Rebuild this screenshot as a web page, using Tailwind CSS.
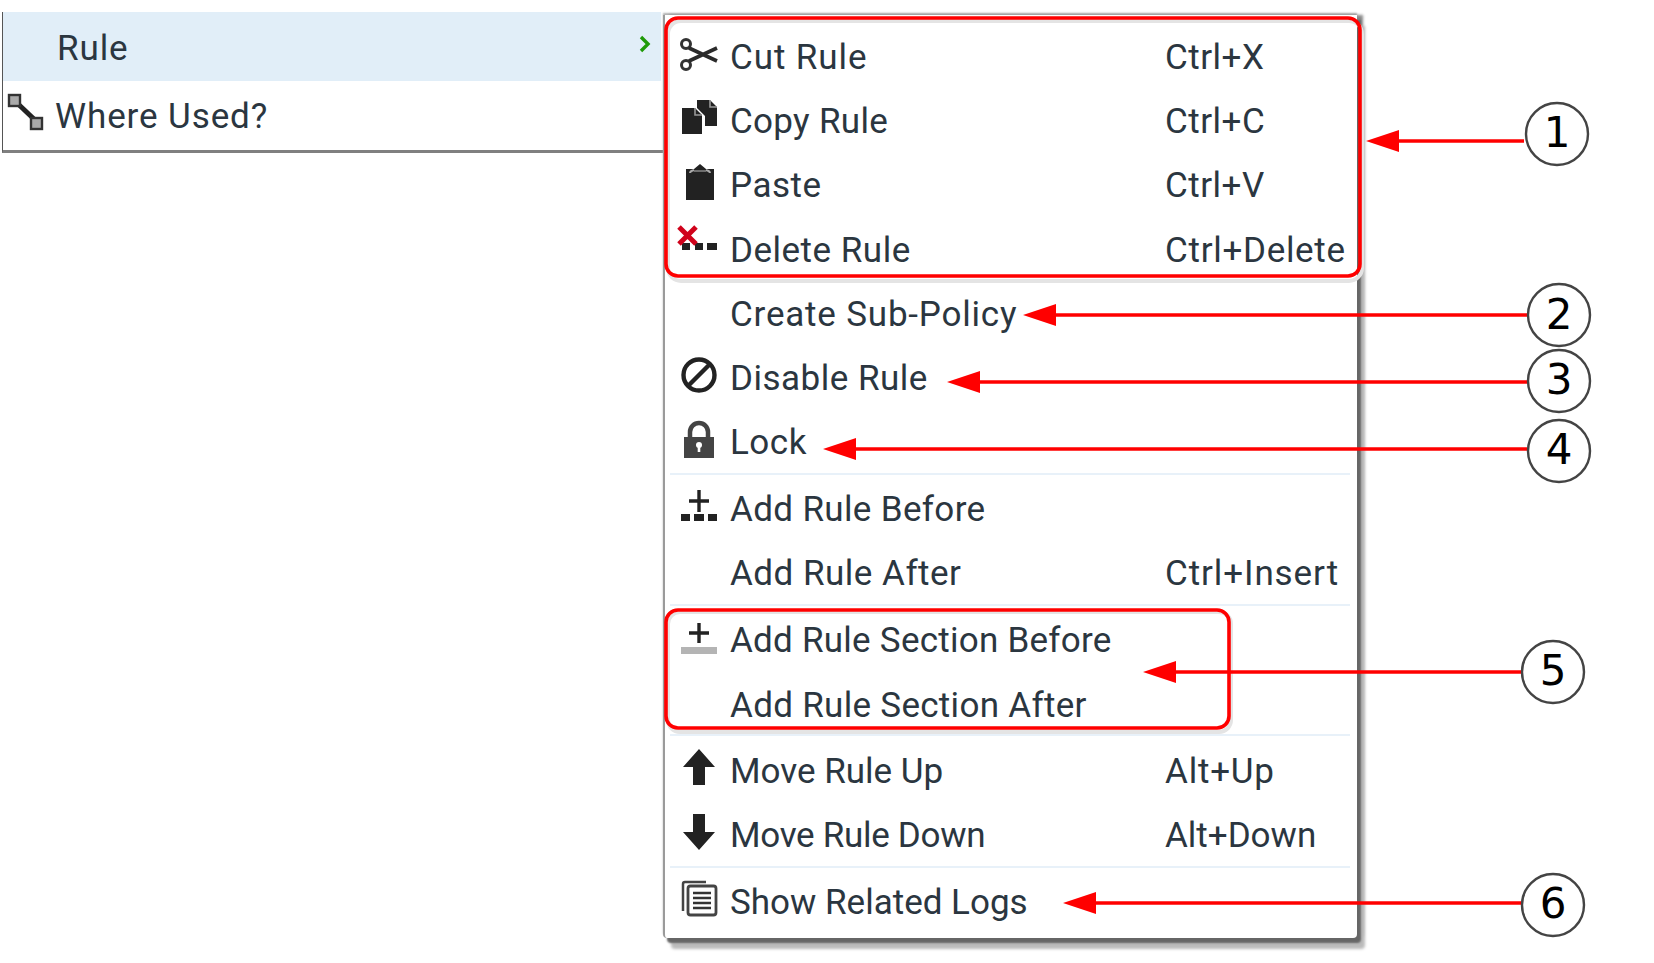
<!DOCTYPE html>
<html>
<head>
<meta charset="utf-8">
<script src="https://cdn.jsdelivr.net/npm/@tailwindcss/browser@4"></script>
</head>
<body class="bg-white">
<div class="relative w-[1654px] h-[963px] overflow-hidden bg-white font-['Roboto',sans-serif] text-[35px] tracking-[0.5px] leading-none text-[#2b3640]">
  <div class="flex items-start pl-[2px] pt-[12px]">
    <!-- parent menu -->
    <div class="w-[661px] h-[141px] border-l border-b-[3px] border-l-[#555] border-b-[#808080] flex flex-col">
      <div class="h-[69px] w-[658px] bg-[#e1eef8] flex items-center pl-[54px] pr-[10px] justify-between">
        <span class="mt-[3px] tracking-[0.9px]">Rule</span>
        <svg class="w-[12px] h-[18px] -mt-[6px] blur-[0.4px]" viewBox="0 0 12 18"><path d="M2 2 L9 9 L2 16" fill="none" stroke="#1f9a08" stroke-width="3.4"/></svg>
      </div>
      <div class="flex-1 flex items-center pl-[52px] relative">
        <svg class="absolute left-[4px] top-[12px] w-[38px] h-[38px] blur-[0.4px]" viewBox="0 0 38 38">
          <path d="M9 9 L29 28" stroke="#222" stroke-width="5"/>
          <rect x="2" y="2" width="11" height="11" fill="#aaa" stroke="#333" stroke-width="2.4"/>
          <rect x="24" y="25" width="11" height="11" fill="#aaa" stroke="#333" stroke-width="2.4"/>
        </svg>
        <span class="mt-[1px] tracking-[0.9px]">Where Used?</span>
      </div>
    </div>
    <!-- context menu -->
    <div class="mt-[3px] w-[694px] h-[923px] bg-white border-l-2 border-l-[#9a9a9a] rounded-b-[4px] shadow-[4px_5px_2px_#666,8px_11px_3px_#bbb,6px_0_3px_#888,0_-2px_2px_#b0b0b0] pt-[10px]">
      <div class="flex h-[64.3px] items-center">
        <div class="w-[65px] pl-[15px] self-start pt-[9px]"><svg class="w-[38px] h-[38px] overflow-visible blur-[0.4px]" viewBox="0 0 38 38"><g fill="none" stroke="#333" stroke-width="3"><circle cx="6" cy="10" r="4.5"/><circle cx="6" cy="31" r="4.5"/></g><path d="M9 14 L37 27 M9 27 L37 14" stroke="#2a2a2a" stroke-width="3.6" fill="none"/></svg></div>
        <div class="w-[435px] tracking-[0.9px]">Cut Rule</div><div>Ctrl+X</div>
      </div>
      <div class="flex h-[64.3px] items-center">
        <div class="w-[65px] pl-[15px] self-start pt-[9px]"><svg class="w-[38px] h-[38px] overflow-visible blur-[0.4px]" viewBox="0 0 38 38"><path d="M17 2 H30 L37 9 V28 H25 V18 L17 10 Z" fill="#222"/><path d="M2 10 H15 L22 17 V36 H2 Z" fill="#222"/><path d="M15 10 V17 H22" fill="none" stroke="#999" stroke-width="1.6"/><path d="M30 2 V9 H37" fill="none" stroke="#999" stroke-width="1.6"/></svg></div>
        <div class="w-[435px] tracking-[0.3px]">Copy Rule</div><div>Ctrl+C</div>
      </div>
      <div class="flex h-[64.3px] items-center">
        <div class="w-[65px] pl-[15px] self-start pt-[9px]"><svg class="w-[38px] h-[38px] overflow-visible blur-[0.4px]" viewBox="0 0 38 38"><path d="M6 6 H14 L20 1 L26 6 H34 V37 H6 Z" fill="#222"/><path d="M10 10 Q10 8 14 7 M30 10 Q30 8 26 7" fill="none" stroke="#aaa" stroke-width="2"/><path d="M14 8 H26" stroke="#888" stroke-width="1.5"/></svg></div>
        <div class="w-[435px]">Paste</div><div>Ctrl+V</div>
      </div>
      <div class="flex h-[64.3px] items-center">
        <div class="w-[65px] pl-[15px] self-start pt-[9px]"><svg class="w-[38px] h-[38px] overflow-visible blur-[0.3px]" viewBox="0 0 38 38"><g fill="#222"><rect x="2" y="16" width="8" height="7"/><rect x="15" y="16" width="8" height="7"/><rect x="27" y="16" width="10" height="7"/></g><path d="M-1 0 L16 17 M16 0 L-1 17" stroke="#d0021b" stroke-width="5"/></svg></div>
        <div class="w-[435px]">Delete Rule</div><div class="tracking-[0.7px]">Ctrl+Delete</div>
      </div>
      <div class="flex h-[64.3px] items-center">
        <div class="w-[65px]"></div>
        <div class="w-[435px] tracking-[0.8px]">Create Sub-Policy</div>
      </div>
      <div class="flex h-[64.3px] items-center">
        <div class="w-[65px] pl-[15px] self-start pt-[9px]"><svg class="w-[38px] h-[38px] overflow-visible blur-[0.4px]" viewBox="0 0 38 38"><circle cx="19" cy="20" r="15.5" fill="none" stroke="#222" stroke-width="4.4"/><path d="M8 31 L30 9" stroke="#222" stroke-width="4.4"/></svg></div>
        <div class="w-[435px]">Disable Rule</div>
      </div>
      <div class="flex h-[64.3px] items-center">
        <div class="w-[65px] pl-[15px] self-start pt-[9px]"><svg class="w-[38px] h-[38px] overflow-visible blur-[0.4px]" viewBox="0 0 38 38"><path d="M10 17 V12 A9 9 0 0 1 28 12 V17" fill="none" stroke="#444" stroke-width="4.5"/><path d="M4 17 H34 V38 H4 Z" fill="#444"/><circle cx="19" cy="25" r="3" fill="#fff"/><rect x="17.7" y="25" width="2.6" height="7" fill="#fff"/></svg></div>
        <div class="w-[435px]">Lock</div>
      </div>
      <div class="h-[2px] -mt-[2px] mb-[2px] mx-[5px] w-[680px] bg-[#e8f1f9]"></div>
      <div class="flex h-[64.3px] items-center">
        <div class="w-[65px] pl-[15px] self-start pt-[9px]"><svg class="w-[38px] h-[38px] overflow-visible blur-[0.3px]" viewBox="0 0 38 38"><path d="M19 4 V26 M9 15 H29" stroke="#222" stroke-width="3.4"/><g fill="#222"><rect x="1" y="28" width="9" height="7"/><rect x="14" y="28" width="10" height="7"/><rect x="28" y="28" width="9" height="7"/></g></svg></div>
        <div class="w-[435px] tracking-[0.35px]">Add Rule Before</div>
      </div>
      <div class="flex h-[64.3px] items-center">
        <div class="w-[65px]"></div>
        <div class="w-[435px]">Add Rule After</div><div class="tracking-[0.9px]">Ctrl+Insert</div>
      </div>
      <div class="h-[2px] -mt-[2px] mb-[3px] mx-[5px] w-[680px] bg-[#e8f1f9]"></div>
      <div class="flex h-[64.3px] items-center">
        <div class="w-[65px] pl-[15px] self-start pt-[9px]"><svg class="w-[38px] h-[38px] overflow-visible blur-[0.3px]" viewBox="0 0 38 38"><path d="M19 5 V25 M9 15 H29" stroke="#222" stroke-width="3.4"/><rect x="1" y="29" width="36" height="7" fill="#b4b4b4"/></svg></div>
        <div class="w-[435px] tracking-[0.25px]">Add Rule Section Before</div>
      </div>
      <div class="flex h-[64.3px] items-center">
        <div class="w-[65px]"></div>
        <div class="w-[435px] tracking-[0.3px]">Add Rule Section After</div>
      </div>
      <div class="h-[2px] -mt-[3px] mb-[3px] mx-[5px] w-[680px] bg-[#e8f1f9]"></div>
      <div class="flex h-[64.3px] items-center">
        <div class="w-[65px] pl-[15px] self-start pt-[9px]"><svg class="w-[38px] h-[38px] overflow-visible blur-[0.3px]" viewBox="0 0 38 38"><path d="M19 1 L35 19 H25 V37 H13 V19 H3 Z" fill="#222"/></svg></div>
        <div class="w-[435px] tracking-[0px]">Move Rule Up</div><div class="tracking-[0.8px]">Alt+Up</div>
      </div>
      <div class="flex h-[64.3px] items-center">
        <div class="w-[65px] pl-[15px] self-start pt-[9px]"><svg class="w-[38px] h-[38px] overflow-visible blur-[0.3px]" viewBox="0 0 38 38"><path d="M13 1 H25 V19 H35 L19 37 L3 19 H13 Z" fill="#222"/></svg></div>
        <div class="w-[435px] tracking-[-0.3px]">Move Rule Down</div><div class="tracking-[0px]">Alt+Down</div>
      </div>
      <div class="h-[2px] -mt-[2px] mb-[2px] mx-[5px] w-[680px] bg-[#e8f1f9]"></div>
      <div class="flex h-[64.3px] items-center">
        <div class="w-[65px] pl-[15px] self-start pt-[9px]"><svg class="w-[38px] h-[38px] overflow-visible blur-[0.3px]" viewBox="0 0 38 38"><path d="M3 32 V5 Q3 3 5 3 H26" fill="none" stroke="#444" stroke-width="2.5"/><rect x="8" y="7" width="28" height="29" rx="2.5" fill="#fff" stroke="#444" stroke-width="2.8"/><path d="M13 14 H31 M13 19 H31 M13 24 H31 M13 29 H31" stroke="#333" stroke-width="2.4"/></svg></div>
        <div class="w-[435px] tracking-[0px]">Show Related Logs</div>
      </div>
    </div>
  </div>

  <!-- callouts drawn over the screenshot -->
  <svg class="absolute left-0 top-0 w-[1654px] h-[963px] pointer-events-none" viewBox="0 0 1654 963">
    <rect x="668" y="21" width="694" height="260" rx="13" fill="none" stroke="#e4e4e4" stroke-width="4"/>
    <rect x="666" y="18" width="694" height="258" rx="12" fill="none" stroke="#ff0000" stroke-width="3.6"/>
    <rect x="668" y="612" width="563" height="120" rx="12" fill="none" stroke="#e4e4e4" stroke-width="4"/>
    <rect x="666" y="610" width="563" height="118" rx="12" fill="none" stroke="#ff0000" stroke-width="3.6"/>
    <g stroke="#ff0000" stroke-width="3.6">
      <path d="M1395 141 H1524"/>
      <path d="M1050 315 H1527"/>
      <path d="M975 382 H1527"/>
      <path d="M850 449 H1527"/>
      <path d="M1170 672 H1521"/>
      <path d="M1090 903 H1521"/>
    </g>
    <g fill="#ff0000">
      <path d="M1366 141 L1399 130 V152 Z"/>
      <path d="M1023 315 L1056 304 V326 Z"/>
      <path d="M947 382 L980 371 V393 Z"/>
      <path d="M823 449 L856 438 V460 Z"/>
      <path d="M1143 672 L1176 661 V683 Z"/>
      <path d="M1063 903 L1096 892 V914 Z"/>
    </g>
    <g fill="#fff" stroke="#444" stroke-width="2.4">
      <circle cx="1557" cy="134" r="31"/>
      <circle cx="1559" cy="315" r="31"/>
      <circle cx="1559" cy="381" r="31"/>
      <circle cx="1559" cy="451" r="31"/>
      <circle cx="1553" cy="672" r="31"/>
      <circle cx="1553" cy="905" r="31"/>
    </g>
    <g font-family="'DejaVu Sans', sans-serif" font-size="42" fill="#000" text-anchor="middle" letter-spacing="0">
      <text x="1557" y="147">1</text>
      <text x="1559" y="329">2</text>
      <text x="1559" y="394">3</text>
      <text x="1559" y="464">4</text>
      <text x="1553" y="685">5</text>
      <text x="1553" y="918">6</text>
    </g>
  </svg>
</div>
</body>
</html>
